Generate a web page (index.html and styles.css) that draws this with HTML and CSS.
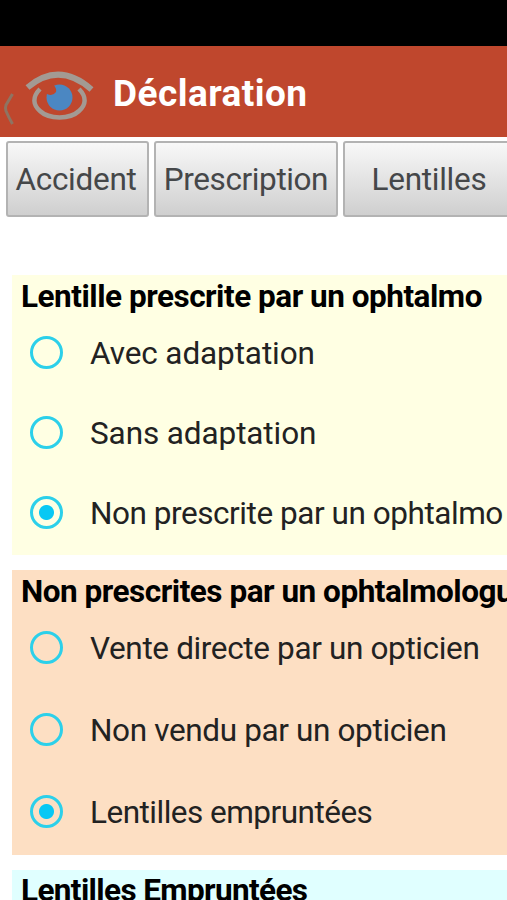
FILE: index.html
```html
<!DOCTYPE html>
<html lang="fr">
<head>
<meta charset="utf-8">
<title>Déclaration</title>
<link rel="stylesheet" href="styles.css">
</head>
<body>
<div class="status"></div>
<header class="bar">
  <svg class="logo" width="100" height="92" viewBox="0 0 100 92" fill="none">
    <path d="M12.500 48 Q9 54 6 59 Q5 62 6 65 Q9 72 12.500 78" stroke="#8e7462" stroke-width="3"/>
    <path d="M27.500 41.500 Q59 15 91.500 43.500" stroke="#a39a93" stroke-width="6"/>
    <path d="M40 43 C32 51 33 59 40 65 C49 73.500 70 73.500 79 65 C86 59 87 51 79 43" stroke="#a39a93" stroke-width="4.500"/>
    <circle cx="59.500" cy="51.500" r="13" fill="#4b87c2"/>
    <path d="M47 41 L53 38.500 Q57 42 56 46 Q53 50.500 47 48Z" fill="#bf472d"/>
  </svg>
  <h1 class="title">Déclaration</h1>
</header>
<nav class="tabs">
  <button class="tab tab-accident">Accident</button>
  <button class="tab tab-prescription">Prescription</button>
  <button class="tab tab-lentilles">Lentilles</button>
</nav>
<main class="content">
  <section class="group prescribed">
    <h2 class="heading">Lentille prescrite par un ophtalmo</h2>
    <div class="option loose"><i class="radio"></i><span>Avec adaptation</span></div>
    <div class="option loose"><i class="radio"></i><span>Sans adaptation</span></div>
    <div class="option snug"><i class="radio on"></i><span>Non prescrite par un ophtalmo</span></div>
  </section>
  <section class="group unprescribed">
    <h2 class="heading">Non prescrites par un ophtalmologue</h2>
    <div class="option"><i class="radio"></i><span>Vente directe par un opticien</span></div>
    <div class="option"><i class="radio"></i><span>Non vendu par un opticien</span></div>
    <div class="option tight"><i class="radio on"></i><span>Lentilles empruntées</span></div>
  </section>
  <section class="group borrowed">
    <h2 class="heading wide">Lentilles Empruntées</h2>
  </section>
</main>
</body>
</html>
```
FILE: styles.css
```css
* { box-sizing: border-box; }
html, body { height: 900px; overflow: hidden; }
body { margin: 0; background: #fff; font-family: Roboto, "Liberation Sans", sans-serif; color: #000; }
.status { height: 46px; background: #000; }
.bar { height: 91px; background: #bf472d; display: flex; align-items: center; }
.logo { flex: none; width: 100px; height: 92px; }
.title { margin: 4px 0 0 13px; font-size: 37px; line-height: 44px; letter-spacing: 0.45px; font-weight: 700; color: #fff; white-space: nowrap; }
.tabs { display: flex; gap: 5px; padding: 4px 0 0 6px; height: 81px; }
.tab { flex: none; height: 76px; padding: 1px 0 0; border: 2px solid #b3b3b3; border-radius: 3px; background: linear-gradient(#f8f8f8, #cfcfcf); font: 400 31.500px Roboto, "Liberation Sans", sans-serif; letter-spacing: -0.27px; color: #454749; white-space: nowrap; }
.tab-accident { width: 143px; padding-right: 3px; }
.tab-prescription { width: 184px; letter-spacing: -0.4px; }
.tab-lentilles { width: 174px; padding-right: 2px; }
.content { margin: 57px 0 0 12px; display: flex; flex-direction: column; gap: 15px; }
.group { flex: none; padding-left: 9px; overflow: hidden; white-space: nowrap; }
.prescribed { height: 280px; background: #ffffe3; }
.unprescribed { height: 285px; background: #fddfc3; }
.borrowed { height: 60px; background: #e0ffff; }
.heading { margin: 0; height: 37px; font-size: 31.500px; line-height: 43px; letter-spacing: -0.48px; font-weight: 700; }
.unprescribed .heading { height: 36px; }
.heading.wide { letter-spacing: -0.62px; line-height: 42px; }
.option { height: 80px; display: flex; align-items: center; gap: 27px; padding-left: 9px; font-size: 31.500px; line-height: 40px; letter-spacing: -0.36px; color: #222; }
.option.loose { letter-spacing: -0.1px; }
.option.snug { letter-spacing: -0.45px; }
.option.tight { letter-spacing: -0.51px; }
.option span { padding-top: 3px; }
.unprescribed .option { height: 82px; }
.radio { flex: none; width: 33px; height: 33px; border: 3px solid #2cd0ea; border-radius: 50%; }
.radio.on { background: radial-gradient(circle, #08c8f4 7px, transparent 8px); }
```
